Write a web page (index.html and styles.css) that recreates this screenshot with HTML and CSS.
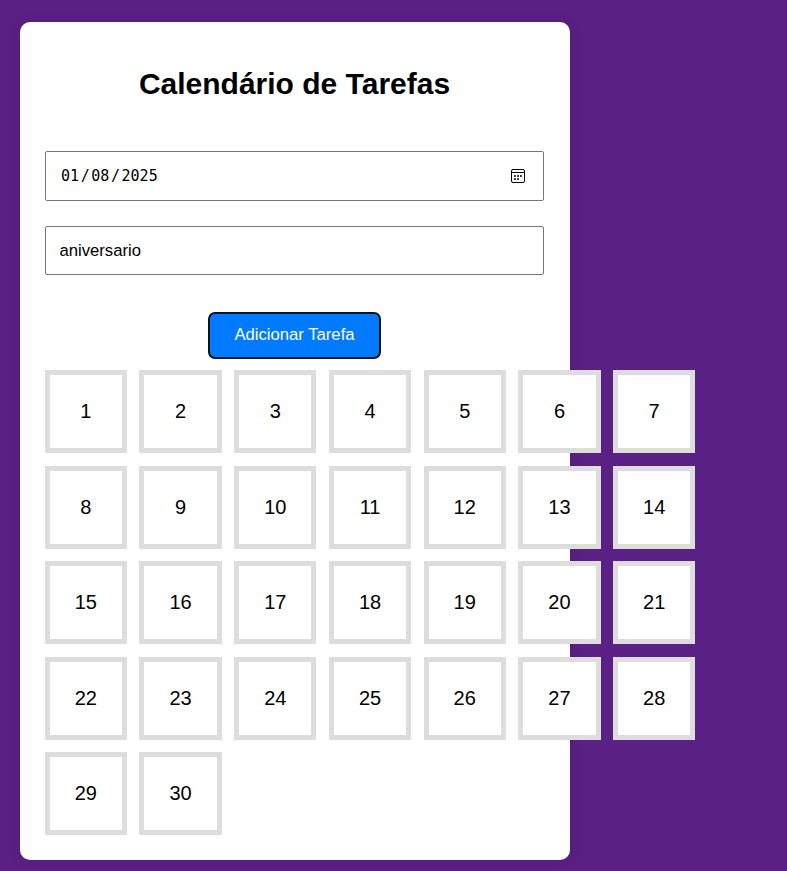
FILE: index.html
```html
<!DOCTYPE html>
<html lang="pt-BR">
<head>
<meta charset="UTF-8">
<title>Calendário de Tarefas</title>
<link rel="stylesheet" href="styles.css">
</head>
<body>
<main class="card">
  <h1 class="title">Calendário de Tarefas</h1>
  <div class="field date-field">
    <span class="date">01<span class="slash">/</span>08<span class="slash">/</span>2025</span>
    <svg class="calendar-icon" width="14" height="14" viewBox="0 0 14 14">
      <rect x=".5" y=".5" width="13" height="13" rx="1.5" fill="none" stroke="#000"/>
      <path d="M1 3.5h12" stroke="#000"/>
      <path d="M3 6h2v2H3zM6 6h2v2H6zM9 6h2v2H9zM3 9h2v2H3zM6 9h2v2H6z" fill="#444"/>
    </svg>
  </div>
  <input class="field task-field" type="text" value="aniversario">
  <button class="add-button" type="button">Adicionar Tarefa</button>
  <div class="calendar">
    <div class="day">1</div><div class="day">2</div><div class="day">3</div><div class="day">4</div><div class="day">5</div><div class="day">6</div><div class="day">7</div>
    <div class="day">8</div><div class="day">9</div><div class="day">10</div><div class="day">11</div><div class="day">12</div><div class="day">13</div><div class="day">14</div>
    <div class="day">15</div><div class="day">16</div><div class="day">17</div><div class="day">18</div><div class="day">19</div><div class="day">20</div><div class="day">21</div>
    <div class="day">22</div><div class="day">23</div><div class="day">24</div><div class="day">25</div><div class="day">26</div><div class="day">27</div><div class="day">28</div>
    <div class="day">29</div><div class="day">30</div>
  </div>
</main>
</body>
</html>
```
FILE: styles.css
```css
* {
  box-sizing: border-box;
}

body {
  margin: 0;
  padding: 22px 20px 11px;
  background: #5a2083;
  font-family: Arial, "Liberation Sans", sans-serif;
  color: #000;
}

.card {
  display: flex;
  flex-direction: column;
  width: 550px;
  height: 838px;
  padding: 25px;
  background: #fff;
  border-radius: 10px;
  box-shadow: 0 0 12.5px rgba(0, 0, 0, 0.1);
}

.title {
  width: 499px;
  margin: 19px 0 50px;
  font-size: 30px;
  line-height: 35px;
  text-align: center;
}

.field {
  flex: none;
  width: 499px;
  border: 1px solid #767676;
  border-radius: 2px;
  background: #fff;
}

.date-field {
  display: flex;
  align-items: center;
  justify-content: space-between;
  height: 50px;
  margin-bottom: 25px;
  padding: 0 18px 0 15px;
}

.date {
  font-family: "DejaVu Sans Mono", monospace;
  font-size: 15px;
  line-height: 20px;
}

.slash {
  padding: 0 1.6px;
}

.task-field {
  height: 49px;
  margin-bottom: 37px;
  padding: 0 13.5px;
  font: 16.67px Arial, "Liberation Sans", sans-serif;
  color: #000;
}

.add-button {
  flex: none;
  align-self: center;
  width: 173px;
  height: 47px;
  margin: 0 1px 11px 0;
  padding: 0 0 2px;
  border: 2px solid #101010;
  border-radius: 7px;
  background: #007bff;
  color: #fff;
  font: 16.67px Arial, "Liberation Sans", sans-serif;
}

.calendar {
  display: grid;
  grid-template-columns: repeat(7, 82.36px);
  grid-auto-rows: 83px;
  gap: 12.5px 12.36px;
  margin-left: -0.3125px;
}

.day {
  display: flex;
  align-items: center;
  justify-content: center;
  border: 5px solid #ddd;
  background: #fff;
  font-size: 20px;
}
```
